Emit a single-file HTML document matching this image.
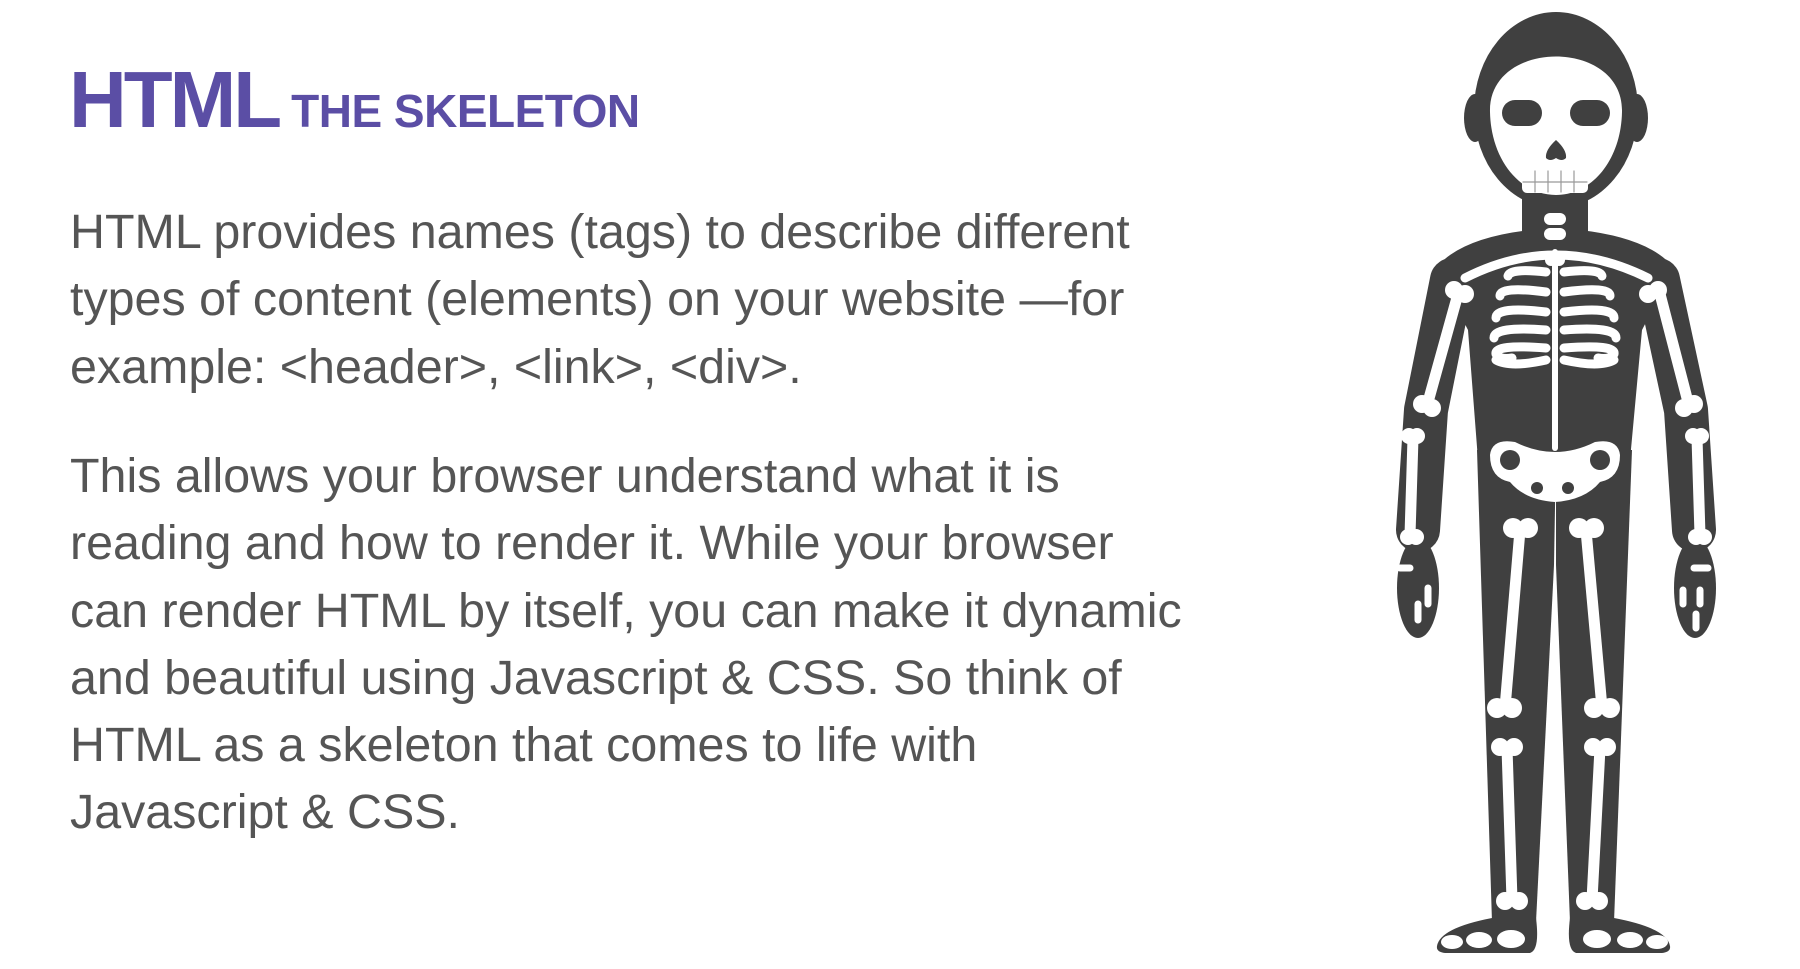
<!DOCTYPE html>
<html><head><meta charset="utf-8"><style>
html,body{margin:0;padding:0;background:#fff;width:1800px;height:969px;overflow:hidden}
.t{position:absolute;left:69px;top:54px;color:#5b4ea5;font-family:"Liberation Sans",sans-serif;font-weight:bold;white-space:nowrap}
.t .a{font-size:80px;letter-spacing:-3px}
.t .b{font-size:46px;letter-spacing:-0.5px;margin-left:12px}
.p{position:absolute;left:70px;font-family:"Liberation Sans",sans-serif;font-size:48.4px;line-height:67.3px;color:#555;white-space:nowrap}
svg{position:absolute;left:0;top:0}
</style></head><body>
<div class="t"><span class="a">HTML</span><span class="b">THE SKELETON</span></div>
<div class="p" style="top:199px">HTML provides names (tags) to describe different<br>types of content (elements) on your website —for<br>example: &lt;header&gt;, &lt;link&gt;, &lt;div&gt;.</div>
<div class="p" style="top:443px">This allows your browser understand what it is<br>reading and how to render it. While your browser<br>can render HTML by itself, you can make it dynamic<br>and beautiful using Javascript &amp; CSS. So think of<br>HTML as a skeleton that comes to life with<br>Javascript &amp; CSS.</div>
<svg width="1800" height="969" viewBox="0 0 1800 969">
<g fill="#404040" stroke="#404040" stroke-linecap="round" stroke-linejoin="round">
<ellipse cx="1556" cy="110" rx="82" ry="98" stroke="none"/>
<ellipse cx="1475" cy="118" rx="11" ry="24" stroke="none"/>
<ellipse cx="1637" cy="118" rx="11" ry="24" stroke="none"/>
<rect x="1522" y="190" width="66" height="60" stroke="none"/>
<path d="M1530,230 L1580,230 Q1650,238 1674,268 L1642,330 L1630,460 L1478,460 L1468,330 L1436,268 Q1460,238 1530,230 Z" stroke="none"/>
<polyline points="1452,280 1426,410 1418,530" fill="none" stroke-width="44"/>
<polyline points="1658,280 1686,410 1694,530" fill="none" stroke-width="44"/>
<ellipse cx="1418" cy="588" rx="21" ry="50" stroke="none"/>
<ellipse cx="1695" cy="588" rx="21" ry="50" stroke="none"/>
<polygon points="1477,450 1556,450 1554,565 1536,922 1492,922" stroke="none"/>
<polygon points="1556,450 1632,450 1614,922 1570,922 1556,565" stroke="none"/>
<path d="M1437,946 Q1440,928 1492,918 L1536,918 Q1540,950 1530,953 L1445,953 Q1436,952 1437,946Z" stroke="none"/>
<path d="M1670,946 Q1667,928 1614,918 L1570,918 Q1566,950 1576,953 L1662,953 Q1671,952 1670,946Z" stroke="none"/>
</g>
<g fill="#fff" stroke="#fff" stroke-linecap="round" stroke-linejoin="round">
<path d="M1490,112 C1488,38 1624,38 1622,112 C1621,160 1592,195 1556,195 C1520,195 1491,160 1490,112Z" stroke="none"/>
<rect x="1502" y="100" width="40" height="26" rx="13" fill="#404040" stroke="none"/>
<rect x="1570" y="100" width="40" height="26" rx="13" fill="#404040" stroke="none"/>
<path d="M1556,140 Q1545,150 1546,158 Q1550,162 1556,158 Q1562,162 1566,158 Q1567,150 1556,140Z" fill="#404040" stroke="none"/>
<rect x="1522" y="170" width="66" height="23" rx="5" stroke="none"/>
<g stroke="#999" stroke-width="1.2" fill="none"><path d="M1535,171V192M1548,171V192M1561,171V192M1574,171V192M1523,182H1587"/></g>
<rect x="1544" y="213" width="22" height="12" rx="6" stroke="none"/>
<rect x="1544" y="228" width="22" height="12" rx="6" stroke="none"/>
<path d="M1465,278 Q1555,232 1648,278" fill="none" stroke-width="9"/>
<line x1="1555" y1="252" x2="1555" y2="448" stroke-width="6"/>
<circle cx="1551" cy="260" r="6" stroke="none"/><circle cx="1559" cy="260" r="6" stroke="none"/>
<g fill="none" stroke-width="9">
<path d="M1546,272 Q1510,268 1508,276"/><path d="M1564,272 Q1600,268 1602,276"/>
<path d="M1546,292 Q1500,286 1500,296"/><path d="M1564,292 Q1610,286 1610,296"/>
<path d="M1546,312 Q1496,306 1496,318"/><path d="M1564,312 Q1614,306 1614,318"/>
<path d="M1546,330 Q1494,326 1494,338"/><path d="M1564,330 Q1616,326 1616,338"/>
<path d="M1546,348 Q1494,344 1496,354 Q1500,360 1512,358"/><path d="M1564,348 Q1616,344 1614,354 Q1610,360 1598,358"/>
<path d="M1546,360 Q1510,368 1496,360"/><path d="M1564,360 Q1600,368 1614,360"/>
</g>
<path d="M1490,455 Q1492,438 1515,442 Q1555,462 1595,442 Q1618,438 1620,455 Q1620,478 1600,482 Q1585,500 1555,502 Q1525,500 1510,482 Q1490,478 1490,455Z" stroke="none"/>
<g fill="#404040" stroke="none"><circle cx="1510" cy="460" r="10"/><circle cx="1600" cy="460" r="10"/><circle cx="1537" cy="488" r="6"/><circle cx="1568" cy="488" r="6"/></g>
<g fill="none" stroke-width="11">
<line x1="1458" y1="294" x2="1428" y2="402"/><line x1="1660" y1="294" x2="1688" y2="402"/>
<line x1="1413" y1="438" x2="1410" y2="535"/><line x1="1697" y1="438" x2="1700" y2="535"/>
<line x1="1520" y1="530" x2="1505" y2="708"/><line x1="1586" y1="530" x2="1602" y2="708"/>
<line x1="1507" y1="748" x2="1512" y2="900"/><line x1="1600" y1="748" x2="1592" y2="900"/>
</g>
<g stroke="none">
<circle cx="1454" cy="290" r="9"/><circle cx="1465" cy="294" r="9"/>
<circle cx="1658" cy="290" r="9"/><circle cx="1648" cy="294" r="9"/>
<circle cx="1422" cy="404" r="9"/><circle cx="1432" cy="408" r="9"/>
<circle cx="1684" cy="408" r="9"/><circle cx="1694" cy="404" r="9"/>
<circle cx="1409" cy="436" r="8"/><circle cx="1417" cy="436" r="8"/>
<circle cx="1693" cy="436" r="8"/><circle cx="1701" cy="436" r="8"/>
<circle cx="1408" cy="537" r="8"/><circle cx="1416" cy="537" r="8"/>
<circle cx="1696" cy="537" r="8"/><circle cx="1704" cy="537" r="8"/>
<circle cx="1513" cy="528" r="10"/><circle cx="1528" cy="528" r="10"/>
<circle cx="1579" cy="528" r="10"/><circle cx="1594" cy="528" r="10"/>
<circle cx="1497" cy="708" r="10"/><circle cx="1512" cy="708" r="10"/>
<circle cx="1594" cy="708" r="10"/><circle cx="1610" cy="708" r="10"/>
<circle cx="1500" cy="747" r="9"/><circle cx="1514" cy="747" r="9"/>
<circle cx="1593" cy="747" r="9"/><circle cx="1607" cy="747" r="9"/>
<circle cx="1505" cy="901" r="9"/><circle cx="1519" cy="901" r="9"/>
<circle cx="1585" cy="901" r="9"/><circle cx="1599" cy="901" r="9"/>
<ellipse cx="1452" cy="942" rx="11" ry="7"/><ellipse cx="1479" cy="940" rx="13" ry="8"/><ellipse cx="1511" cy="939" rx="14" ry="9"/>
<ellipse cx="1597" cy="939" rx="14" ry="9"/><ellipse cx="1630" cy="940" rx="13" ry="8"/><ellipse cx="1657" cy="942" rx="11" ry="7"/>
</g>
<g stroke-width="7" fill="none">
<path d="M1400,568H1410M1428,588V604M1418,604V620"/>
<path d="M1694,568H1708M1683,590V604M1700,590V604M1696,614V628"/>
</g>
</g>
</svg>
</body></html>
